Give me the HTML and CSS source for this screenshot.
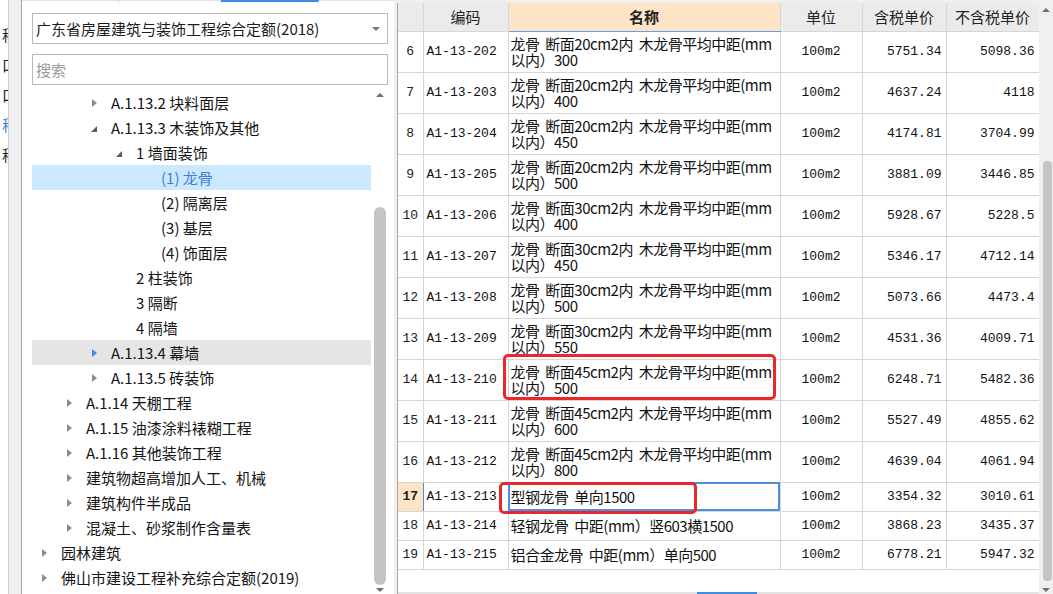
FILE: index.html
```html
<!DOCTYPE html>
<html lang="zh">
<head>
<meta charset="utf-8">
<title>定额库</title>
<link rel="stylesheet" href="styles.css">
</head>
<body>
<div class="edge">
  <div class="edge-panel">
    <div class="edge-line">称</div>
    <div class="edge-line">口</div>
    <div class="edge-line">口</div>
    <div class="edge-line blue">称</div>
    <div class="edge-line">称</div>
  </div>
</div>

<div class="left">
  <div class="tabs">
    <div class="tab" style="width:97px"></div>
    <div class="tab" style="width:102px"></div>
    <div class="tab on" style="width:98px"></div>
    <div class="tab last"></div>
  </div>
  <div class="combo">广东省房屋建筑与装饰工程综合定额(2018)<i class="combo-arrow"></i></div>
  <div class="search">搜索</div>
  <div class="tree-wrap">
    <div class="tree">
      <div class="row l2"><span class="tg"><i class="tri-r"></i></span><span>A.1.13.2 块料面层</span></div>
      <div class="row l2"><span class="tg"><i class="tri-d"></i></span><span>A.1.13.3 木装饰及其他</span></div>
      <div class="row l3"><span class="tg"><i class="tri-d"></i></span><span>1 墙面装饰</span></div>
      <div class="row l4 selected"><span class="tg"></span><span>(1) 龙骨</span></div>
      <div class="row l4"><span class="tg"></span><span>(2) 隔离层</span></div>
      <div class="row l4"><span class="tg"></span><span>(3) 基层</span></div>
      <div class="row l4"><span class="tg"></span><span>(4) 饰面层</span></div>
      <div class="row l3"><span class="tg"></span><span>2 柱装饰</span></div>
      <div class="row l3"><span class="tg"></span><span>3 隔断</span></div>
      <div class="row l3"><span class="tg"></span><span>4 隔墙</span></div>
      <div class="row l2 hover"><span class="tg"><i class="tri-r active"></i></span><span>A.1.13.4 幕墙</span></div>
      <div class="row l2"><span class="tg"><i class="tri-r"></i></span><span>A.1.13.5 砖装饰</span></div>
      <div class="row l1"><span class="tg"><i class="tri-r"></i></span><span>A.1.14 天棚工程</span></div>
      <div class="row l1"><span class="tg"><i class="tri-r"></i></span><span>A.1.15 油漆涂料裱糊工程</span></div>
      <div class="row l1"><span class="tg"><i class="tri-r"></i></span><span>A.1.16 其他装饰工程</span></div>
      <div class="row l1"><span class="tg"><i class="tri-r"></i></span><span>建筑物超高增加人工、机械</span></div>
      <div class="row l1"><span class="tg"><i class="tri-r"></i></span><span>建筑构件半成品</span></div>
      <div class="row l1"><span class="tg"><i class="tri-r"></i></span><span>混凝土、砂浆制作含量表</span></div>
      <div class="row l0"><span class="tg"><i class="tri-r"></i></span><span>园林建筑</span></div>
      <div class="row l0"><span class="tg"><i class="tri-r"></i></span><span>佛山市建设工程补充综合定额(2019)</span></div>
    </div>
    <div class="vscroll tree-scroll">
      <i class="arr-up"></i>
      <div class="thumb tree-thumb"></div>
      <i class="arr-down"></i>
    </div>
  </div>
</div>

<div class="right">
  <div class="table-area">
    <table class="grid">
      <colgroup>
        <col style="width:25px"><col style="width:85px"><col style="width:272px"><col style="width:82px"><col style="width:84px"><col style="width:93px">
      </colgroup>
      <thead>
        <tr><th class="rn"></th><th>编码</th><th class="act">名称</th><th>单位</th><th>含税单价</th><th>不含税单价</th></tr>
      </thead>
      <tbody>
        <tr class="two"><td class="rn">6</td><td class="code">A1-13-202</td><td class="name"><div class="ln">龙骨 断面20cm2内 木龙骨平均中距(mm</div><div class="ln">以内）300</div></td><td class="unit">100m2</td><td class="num">5751.34</td><td class="num">5098.36</td></tr>
        <tr class="two"><td class="rn">7</td><td class="code">A1-13-203</td><td class="name"><div class="ln">龙骨 断面20cm2内 木龙骨平均中距(mm</div><div class="ln">以内）400</div></td><td class="unit">100m2</td><td class="num">4637.24</td><td class="num">4118</td></tr>
        <tr class="two"><td class="rn">8</td><td class="code">A1-13-204</td><td class="name"><div class="ln">龙骨 断面20cm2内 木龙骨平均中距(mm</div><div class="ln">以内）450</div></td><td class="unit">100m2</td><td class="num">4174.81</td><td class="num">3704.99</td></tr>
        <tr class="two"><td class="rn">9</td><td class="code">A1-13-205</td><td class="name"><div class="ln">龙骨 断面20cm2内 木龙骨平均中距(mm</div><div class="ln">以内）500</div></td><td class="unit">100m2</td><td class="num">3881.09</td><td class="num">3446.85</td></tr>
        <tr class="two"><td class="rn">10</td><td class="code">A1-13-206</td><td class="name"><div class="ln">龙骨 断面30cm2内 木龙骨平均中距(mm</div><div class="ln">以内）400</div></td><td class="unit">100m2</td><td class="num">5928.67</td><td class="num">5228.5</td></tr>
        <tr class="two"><td class="rn">11</td><td class="code">A1-13-207</td><td class="name"><div class="ln">龙骨 断面30cm2内 木龙骨平均中距(mm</div><div class="ln">以内）450</div></td><td class="unit">100m2</td><td class="num">5346.17</td><td class="num">4712.14</td></tr>
        <tr class="two"><td class="rn">12</td><td class="code">A1-13-208</td><td class="name"><div class="ln">龙骨 断面30cm2内 木龙骨平均中距(mm</div><div class="ln">以内）500</div></td><td class="unit">100m2</td><td class="num">5073.66</td><td class="num">4473.4</td></tr>
        <tr class="two"><td class="rn">13</td><td class="code">A1-13-209</td><td class="name"><div class="ln">龙骨 断面30cm2内 木龙骨平均中距(mm</div><div class="ln">以内）550</div></td><td class="unit">100m2</td><td class="num">4531.36</td><td class="num">4009.71</td></tr>
        <tr class="two"><td class="rn">14</td><td class="code">A1-13-210</td><td class="name"><div class="ln">龙骨 断面45cm2内 木龙骨平均中距(mm</div><div class="ln">以内）500</div></td><td class="unit">100m2</td><td class="num">6248.71</td><td class="num">5482.36</td></tr>
        <tr class="two"><td class="rn">15</td><td class="code">A1-13-211</td><td class="name"><div class="ln">龙骨 断面45cm2内 木龙骨平均中距(mm</div><div class="ln">以内）600</div></td><td class="unit">100m2</td><td class="num">5527.49</td><td class="num">4855.62</td></tr>
        <tr class="two"><td class="rn">16</td><td class="code">A1-13-212</td><td class="name"><div class="ln">龙骨 断面45cm2内 木龙骨平均中距(mm</div><div class="ln">以内）800</div></td><td class="unit">100m2</td><td class="num">4639.04</td><td class="num">4061.94</td></tr>
        <tr class="one cur"><td class="rn">17</td><td class="code">A1-13-213</td><td class="name sel">型钢龙骨 单向1500</td><td class="unit">100m2</td><td class="num">3354.32</td><td class="num">3010.61</td></tr>
        <tr class="one"><td class="rn">18</td><td class="code">A1-13-214</td><td class="name">轻钢龙骨 中距(mm）竖603横1500</td><td class="unit">100m2</td><td class="num">3868.23</td><td class="num">3435.37</td></tr>
        <tr class="one"><td class="rn">19</td><td class="code">A1-13-215</td><td class="name">铝合金龙骨 中距(mm）单向500</td><td class="unit">100m2</td><td class="num">6778.21</td><td class="num">5947.32</td></tr>
      </tbody>
    </table>
    <div class="hbar"><div class="hbar-on"></div></div>
  </div>
  <div class="vscroll grid-scroll">
    <i class="arr-up"></i>
    <div class="thumb grid-thumb"></div>
    <i class="arr-down"></i>
  </div>
  <div class="mark mark-a"></div>
  <div class="mark mark-b"></div>
</div>
</body>
</html>
```

FILE: styles.css
```css
* { box-sizing: border-box; }
html, body { margin: 0; padding: 0; }
body {
  width: 1053px;
  height: 594px;
  overflow: hidden;
  background: #f0f0f0;
  font-family: "Noto Sans CJK SC", "Microsoft YaHei", sans-serif;
  font-size: 15px;
  color: #1c1c1c;
  display: flex;
}

/* far-left cut-off panel */
.edge { width: 21px; flex-shrink: 0; display: flex; }
.edge-panel {
  width: 9px;
  background: #fff;
  border-right: 1px solid #cfcfcf;
  overflow: hidden;
  padding-top: 20px;
}
.edge-line {
  height: 30px;
  line-height: 30px;
  white-space: nowrap;
  text-align: right;
  margin-right: -9px;
}
.edge-line.blue { color: #3d7fd9; }

/* left panel */
.left {
  width: 373px;
  flex-shrink: 0;
  background: #fff;
  border-left: 1px solid #a7a7a7;
  display: flex;
  flex-direction: column;
}
.tabs { height: 3px; display: flex; }
.tab { border-right: 1px solid #d6d6d6; border-top: 1px solid #e2e2e2; }
.tab.on { border-top: 2px solid #3a8ee6; }
.tab.last { flex: 1; border-right: none; }

.combo {
  position: relative;
  height: 31px;
  margin: 10px 6px 0 10px;
  border: 1px solid #b9b9b9;
  padding-left: 3px;
  display: flex;
  align-items: center;
  white-space: nowrap;
}
.combo-arrow {
  position: absolute;
  right: 7px;
  top: 13px;
  width: 0; height: 0;
  border-left: 4px solid transparent;
  border-right: 4px solid transparent;
  border-top: 4px solid #777;
}
.search {
  height: 31px;
  margin: 10px 6px 0 10px;
  border: 1px solid #b9b9b9;
  padding-left: 3px;
  display: flex;
  align-items: center;
  color: #9a9a9a;
}
.tree-wrap {
  flex: 1;
  min-height: 0;
  margin: 3px 6px 0 10px;
  display: flex;
}
.tree { flex: 1; padding-top: 2px; overflow: hidden; }
.row {
  height: 25px;
  display: flex;
  align-items: center;
  white-space: nowrap;
  color: #141414;
}
.l0 { padding-left: 8px; }
.l1 { padding-left: 33px; }
.l2 { padding-left: 58px; }
.l3 { padding-left: 83px; }
.l4 { padding-left: 108px; }
.tg { width: 21px; flex-shrink: 0; height: 25px; display: flex; align-items: center; padding-left: 2px; }
.tri-r {
  width: 0; height: 0;
  border-left: 5px solid #8c8c8c;
  border-top: 4px solid transparent;
  border-bottom: 4px solid transparent;
}
.tri-r.active { border-left-color: #3a8ee6; }
.tri-d {
  width: 0; height: 0;
  margin-left: -1px;
  margin-top: 2px;
  border-bottom: 6px solid #5c5c5c;
  border-left: 6px solid transparent;
}
.row.selected { background: #cce8ff; color: #3d7fd9; }
.row.hover { background: #e5e5e5; }

/* scrollbars */
.vscroll {
  flex-shrink: 0;
  display: flex;
  flex-direction: column;
  align-items: center;
}
.tree-scroll { width: 17px; background: #fff; }
.grid-scroll { width: 14px; background: #f0f0f0; }
.arr-up {
  width: 0; height: 0;
  margin-top: 5px;
  border-left: 4px solid transparent;
  border-right: 4px solid transparent;
  border-bottom: 4px solid #6f6f6f;
}
.arr-down {
  width: 0; height: 0;
  margin-top: auto;
  margin-bottom: 2px;
  border-left: 4px solid transparent;
  border-right: 4px solid transparent;
  border-top: 4px solid #6f6f6f;
}
.thumb { background: #c4c4c4; border-radius: 6px; }
.tree-thumb { width: 12px; height: 378px; margin-top: 110px; }
.grid-thumb { width: 9px; height: 420px; margin-top: 149px; margin-left: 3px; border-radius: 4px; }

/* right grid panel */
.right {
  position: relative;
  flex: 1;
  margin-left: 3px;
  margin-top: 3px;
  background: #fff;
  border-left: 1px solid #a7a7a7;
  display: flex;
}
.table-area { width: 641px; display: flex; flex-direction: column; }
.grid {
  width: 641px;
  border-collapse: collapse;
  table-layout: fixed;
}
.grid th, .grid td {
  border: 1px solid #d6d6d6;
  padding: 0;
  overflow: hidden;
  white-space: nowrap;
}
.grid tr > :first-child { border-left: none; }
.grid thead th { border-top: none; }
.grid th {
  height: 28px;
  background: #ebebeb;
  font-weight: normal;
  color: #222;
  text-align: center;
}
.grid th.act {
  background: #fde4c6;
  font-weight: bold;
  border-bottom-color: #5ea2e8;
}
.grid tr.two { height: 41px; }
.grid tr.one { height: 29px; }
.grid .rn {
  text-align: center;
  font-family: "Liberation Mono", monospace;
  font-size: 13px;
  color: #222;
}
.grid .code {
  padding-left: 3px;
  font-family: "Liberation Mono", monospace;
  font-size: 13px;
  color: #111;
}
.grid .name {
  padding-left: 2px;
  color: #111;
  letter-spacing: -0.5px;
  word-spacing: 3px;
}
.ln { height: 16px; line-height: 16px; }
.name .ln:first-child { margin-top: 1px; }
.grid .unit {
  text-align: center;
  font-family: "Liberation Mono", monospace;
  font-size: 13px;
  color: #111;
}
.grid .num {
  text-align: right;
  padding-right: 4px;
  font-family: "Liberation Mono", monospace;
  font-size: 13px;
  color: #111;
}
.grid .cur .rn {
  background: #fde4c6;
  font-weight: bold;
  border-right-color: #4a90e2;
}
.grid .name.sel { outline: 2px solid #4a90e2; outline-offset: -2px; }

.hbar { margin-top: auto; height: 2px; background: #e3e3e3; }
.hbar-on { margin-left: 299px; width: 60px; height: 2px; background: #3a8ee6; }

/* red annotation boxes over the grid */
.mark {
  position: absolute;
  border: 3px solid #e8282b;
  border-radius: 5px;
}
.mark-a { left: 105px; top: 351px; width: 273px; height: 46px; }
.mark-b { left: 101px; top: 479px; width: 198px; height: 32px; }
```
